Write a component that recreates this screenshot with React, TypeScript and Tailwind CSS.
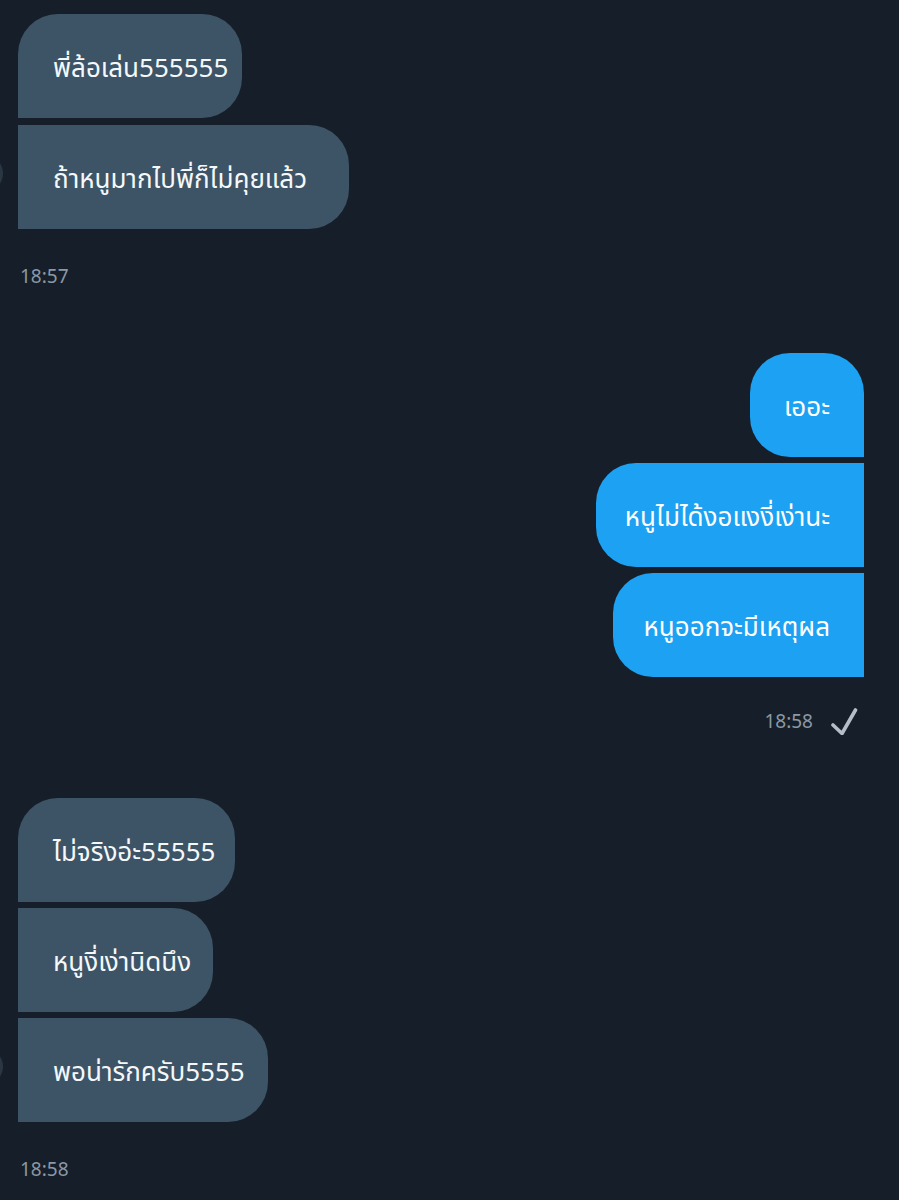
import React from "react";

const font = { fontFamily: '"Noto Sans Thai", "Noto Sans", "Liberation Sans", sans-serif' };

function Left({ text, w, cls, avatar }: { text: string; w: string; cls: string; avatar?: boolean }) {
  return (
    <div className="relative flex">
      {avatar && (
        <div className="absolute left-[-52px] top-[30px] w-[37px] h-[37px] rounded-full bg-[#2a3743]" />
      )}
      <div
        className={`${w} ${cls} h-[104px] bg-[#3d5466] text-[#f5f8fa] text-[26px] pl-[35px] pt-[6px] flex items-center whitespace-nowrap`}
      >
        {text}
      </div>
    </div>
  );
}

function Right({ text, w, cls }: { text: string; w: string; cls: string }) {
  return (
    <div className="flex justify-end">
      <div
        className={`${w} ${cls} h-[104px] bg-[#1da1f2] text-white text-[26px] pr-[34px] pt-[6px] flex items-center justify-end whitespace-nowrap`}
      >
        {text}
      </div>
    </div>
  );
}

export default function App() {
  return (
    <div className="w-[899px] h-[1200px] bg-[#161f29] overflow-hidden" style={font}>
      <div className="flex flex-col pt-[14px] pl-[18px] pr-[35px]">
        <div className="flex flex-col gap-[7px]">
          <Left text="พี่ล้อเล่น555555" w="w-[224px]" cls="rounded-tl-[40px] rounded-tr-[40px] rounded-br-[40px]" />
          <Left text="ถ้าหนูมากไปพี่ก็ไม่คุยแล้ว" w="w-[331px]" cls="rounded-tr-[40px] rounded-br-[40px]" avatar />
        </div>
        <div className="h-[28px] mt-[35px] flex items-center pl-[2px] text-[19px] text-[#8b98a5]">18:57</div>

        <div className="flex flex-col gap-[6px] mt-[61px]">
          <Right text="เออะ" w="w-[114px]" cls="rounded-tl-[40px] rounded-tr-[40px] rounded-bl-[40px]" />
          <Right text="หนูไม่ได้งอแงงี่เง่านะ" w="w-[268px]" cls="rounded-tl-[40px] rounded-bl-[40px]" />
          <Right text="หนูออกจะมีเหตุผล" w="w-[251px]" cls="rounded-tl-[40px] rounded-bl-[40px]" />
        </div>
        <div className="h-[28px] mt-[30px] flex items-center justify-end gap-[17px] pr-[6px] text-[19px] text-[#8b98a5]">
          <span className="pt-[5px]">18:58</span>
          <svg width="28" height="28" viewBox="0 0 28 28" fill="none">
            <path d="M3 18 L12 26.5 L25.5 3" stroke="#b3bec8" strokeWidth="3.6" strokeLinecap="round" strokeLinejoin="round" />
          </svg>
        </div>

        <div className="flex flex-col gap-[6px] mt-[63px]">
          <Left text="ไม่จริงอ่ะ55555" w="w-[217px]" cls="rounded-tl-[40px] rounded-tr-[40px] rounded-br-[40px]" />
          <Left text="หนูงี่เง่านิดนึง" w="w-[195px]" cls="rounded-tr-[40px] rounded-br-[40px]" />
          <Left text="พอน่ารักครับ5555" w="w-[250px]" cls="rounded-tr-[40px] rounded-br-[40px]" avatar />
        </div>
        <div className="h-[28px] mt-[35px] flex items-center pl-[2px] text-[19px] text-[#8b98a5]">18:58</div>
      </div>
    </div>
  );
}
